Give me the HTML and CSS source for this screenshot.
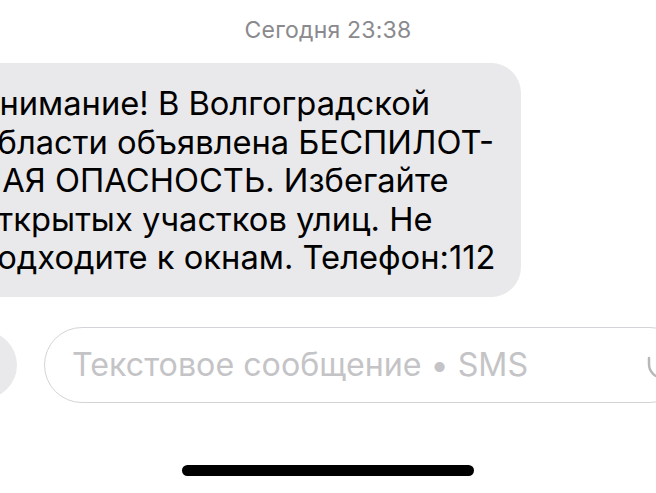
FILE: index.html
```html
<!DOCTYPE html>
<html lang="ru">
<head>
<meta charset="utf-8">
<title>Сообщения</title>
<link rel="stylesheet" href="styles.css">
</head>
<body>
<main class="thread">
  <div class="stamp">Сегодня 23:38</div>

  <div class="bubble">
    <p class="bubble-text">Внимание! В Волгоградской<br>области объявлена БЕСПИЛОТ-<br>НАЯ ОПАСНОСТЬ. Избегайте<br>открытых участков улиц. Не<br>подходите к окнам. Телефон:112</p>
  </div>

  <div class="composer">
    <div class="apps-button"></div>
    <div class="field">
      <span class="placeholder">Текстовое сообщение • SMS</span>
      <svg class="mic" width="32" height="40" viewBox="0 0 32 40" aria-hidden="true">
        <rect x="11" y="0" width="10" height="20" rx="5" fill="none" stroke="currentColor" stroke-width="2.5"/>
        <path d="M2 6 v6 a14 14 0 0 0 28 0 v-6" fill="none" stroke="currentColor" stroke-width="2.5" stroke-linecap="round"/>
        <path d="M16 26 v7" fill="none" stroke="currentColor" stroke-width="2.5" stroke-linecap="round"/>
      </svg>
    </div>
  </div>

  <div class="home-bar"></div>
</main>
</body>
</html>
```

FILE: styles.css
```css
html, body {
  margin: 0;
  padding: 0;
  background: #ffffff;
}

body {
  width: 656px;
  height: 493px;
  overflow: hidden;
  font-family: Inter, "Liberation Sans", sans-serif;
}

.thread {
  display: flex;
  flex-direction: column;
}

.stamp {
  padding-top: 17px;
  height: 26px;
  line-height: 26px;
  font-size: 23px;
  font-weight: 400;
  color: #8a8a8e;
  text-align: center;
  letter-spacing: 0.2px;
}

.bubble {
  margin-top: 20px;
  margin-left: -46px;
  align-self: flex-start;
  width: 567px;
  box-sizing: border-box;
  padding: 21px 0 20px 24px;
  background: #e9e9eb;
  border-radius: 30px;
}

.bubble-text {
  margin: 0;
  font-size: 32.7px;
  line-height: 38.5px;
  color: #000000;
  white-space: nowrap;
}

.composer {
  margin-top: 30px;
  display: flex;
  align-items: center;
  gap: 27px;
}

.apps-button {
  flex: none;
  width: 68px;
  height: 68px;
  margin-left: -51px;
  border-radius: 50%;
  background: #e9e9eb;
}

.field {
  flex: none;
  width: 643.5px;
  height: 76px;
  box-sizing: border-box;
  border: 1.5px solid #d4d4d8;
  border-radius: 38px;
  display: flex;
  align-items: center;
  padding-left: 27px;
}

.placeholder {
  font-size: 32.2px;
  color: #c4c4c7;
  white-space: nowrap;
}

.mic {
  margin-left: auto;
  margin-right: 8px;
  color: #b8b8bb;
  position: relative;
  top: 7px;
}

.home-bar {
  margin-top: 62px;
  align-self: center;
  width: 292px;
  height: 11px;
  border-radius: 6px;
  background: #000000;
}
```
